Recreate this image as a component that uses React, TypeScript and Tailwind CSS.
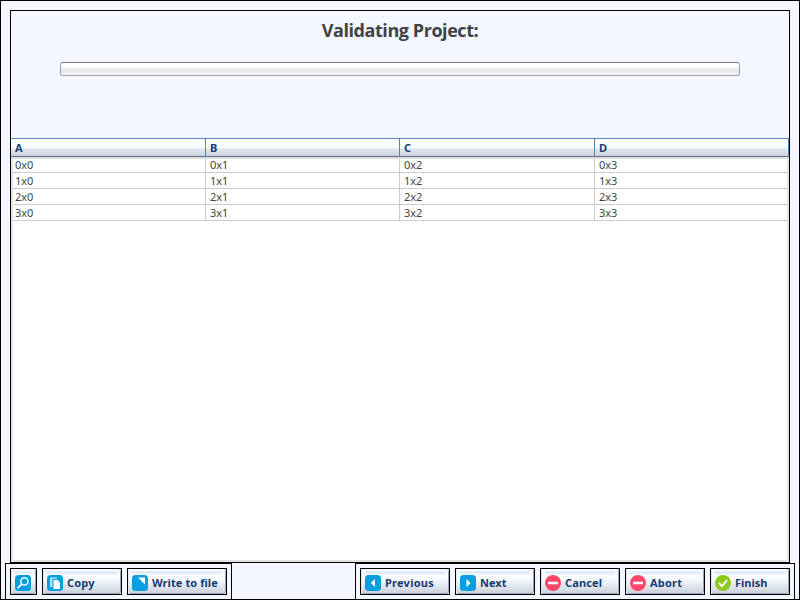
import type { ReactNode } from 'react';

const columns = ['A', 'B', 'C', 'D'];
const rows = [0, 1, 2, 3];

function Search() {
  return (
    <svg width="16" height="16" viewBox="0 0 16 16" className="shrink-0">
      <rect width="16" height="16" rx="3.5" fill="#089fe0" />
      <circle cx="9.4" cy="6.4" r="3.6" fill="none" stroke="#fff" strokeWidth="1.4" />
      <path d="M6.7 9.1L3.2 12.6" stroke="#fff" strokeWidth="1.8" strokeLinecap="round" />
    </svg>
  );
}

function CopyIcon() {
  return (
    <svg width="16" height="16" viewBox="0 0 16 16" className="shrink-0">
      <rect width="16" height="16" rx="3.5" fill="#089fe0" />
      <path d="M3 2.5h7v1.5H5.5v8H3z" fill="#a9dff6" />
      <path d="M6.5 5H10.8L13 7.2V14H6.5z" fill="#fff" />
      <path d="M10.8 5v2.2H13z" fill="#8dd3f2" />
    </svg>
  );
}

function WriteIcon() {
  return (
    <svg width="16" height="16" viewBox="0 0 16 16" className="shrink-0">
      <rect width="16" height="16" rx="3.5" fill="#089fe0" />
      <path d="M6 2.5h7v7z" fill="#fff" />
    </svg>
  );
}

function Arrow({ left = false }: { left?: boolean }) {
  return (
    <svg width="16" height="16" viewBox="0 0 16 16" className="shrink-0">
      <rect width="16" height="16" rx="3.5" fill="#089fe0" />
      <path d={left ? 'M10 4v8L6 8z' : 'M6.5 4v8l4-4z'} fill="#fff" />
    </svg>
  );
}

function Minus() {
  return (
    <svg width="16" height="16" viewBox="0 0 16 16" className="shrink-0">
      <circle cx="8" cy="8" r="8" fill="#ff4869" />
      <rect x="3" y="6.8" width="10" height="2.4" rx="0.5" fill="#fff" />
    </svg>
  );
}

function Check() {
  return (
    <svg width="16" height="16" viewBox="0 0 16 16" className="shrink-0">
      <circle cx="8" cy="8" r="8" fill="#8fc91d" />
      <path d="M4 8.2l3 3 5-6" fill="none" stroke="#fff" strokeWidth="1.9" />
    </svg>
  );
}

function Button({ width, icon, label, textClass = '' }: { width: string; icon: ReactNode; label?: string; textClass?: string }) {
  return (
    <button className={`h-[27px] shrink-0 border border-black bg-[#f4f7ff] ${width}`}>
      <span className="relative flex h-[25px] items-center rounded-[3px] border-r border-b border-l border-r-[#9aa6b9] border-b-[#98a4b7] border-l-[#e2e7ef] bg-linear-to-b from-[#f8fbff] from-40% via-[#e9edf5] via-60% to-[#cdd3dd] pt-[4px] pl-[3px]">
        <span className="absolute top-[2px] right-[3px] left-[2px] h-[3px] rounded-sm bg-[#e1ecfa]" />
        {icon}
        {label && <span className={`ml-1 text-[11px] leading-4 font-bold whitespace-nowrap text-[#153c72] ${textClass}`}>{label}</span>}
      </span>
    </button>
  );
}

export default function App() {
  return (
    <div className="flex h-[600px] w-[800px] flex-col overflow-hidden border border-black bg-[#f4f7ff] font-['Noto_Sans',sans-serif]">
      <main className="mx-[9px] mt-[9px] flex h-[553px] shrink-0 flex-col border border-black">
        <header className="h-[127px] shrink-0 px-[49px] pt-[5px]">
          <h1 className="text-center font-['Open_Sans',sans-serif] text-[18px] leading-7 font-bold tracking-[-0.43px] text-[#424246]">Validating Project:</h1>
          <div className="mt-[18px] h-[14px] rounded-[3px] border border-[#a0a3a8] border-t-[#77797c] bg-linear-to-b from-white from-30% via-[#e5e8ed] via-55% to-[#f2f4f6]" />
        </header>
        <div className="grid h-[19px] shrink-0 grid-cols-[195px_194px_195px_194px] border-t border-b border-t-[#5c86b7] border-b-[#5c6f8e] bg-linear-to-b from-[#f8fcff] from-50% via-[#e0e4ec] via-60% to-[#ced2df]">
          {columns.map((c) => (
            <div key={c} className="border-r border-[#5783b6] pl-[4px] text-[11px] leading-[18px] font-bold text-[#123e77]">{c}</div>
          ))}
        </div>
        <div className="flex-1 border-2 border-t-[#dedede] border-r-[#e3e3e3] border-b-[#e3e3e3] border-l-[#e3e3e3] bg-white">
          {rows.map((r, i) => (
            <div key={r} className={`grid grid-cols-[193px_194px_195px_192px] border-b border-[#cccccc] ${i === 0 ? 'h-[14px]' : 'h-4'}`}>
              {rows.map((c) => (
                <div key={c} className={`text-[11px] tracking-[-0.1px] text-[#444] ${i === 0 ? 'leading-[12px]' : 'leading-[16px]'} ${c < 3 ? 'border-r border-[#cccccc]' : ''} ${c === 0 ? 'pl-[2px]' : 'pl-[4px]'}`}>
                  {r}x{c}
                </div>
              ))}
            </div>
          ))}
        </div>
      </main>
      <footer className="mx-1 flex h-[36px] shrink-0 justify-between">
        <div className="flex w-[227px] gap-[5px] border border-b-0 border-black pt-1 pl-1">
          <Button width="w-[27px]" icon={<Search />} />
          <Button width="w-[80px]" icon={<CopyIcon />} label="Copy" textClass="tracking-[0.2px]" />
          <Button width="w-[100px]" icon={<WriteIcon />} label="Write to file" textClass="tracking-[0.08px]" />
        </div>
        <div className="flex w-[440px] gap-[5px] border border-b-0 border-black pt-1 pl-1">
          <Button width="w-[90px]" icon={<Arrow left />} label="Previous" textClass="tracking-[0.25px]" />
          <Button width="w-[80px]" icon={<Arrow />} label="Next" />
          <Button width="w-[80px]" icon={<Minus />} label="Cancel" textClass="tracking-[0.15px]" />
          <Button width="w-[80px]" icon={<Minus />} label="Abort" textClass="tracking-[0.2px]" />
          <Button width="w-[80px]" icon={<Check />} label="Finish" />
        </div>
      </footer>
    </div>
  );
}
